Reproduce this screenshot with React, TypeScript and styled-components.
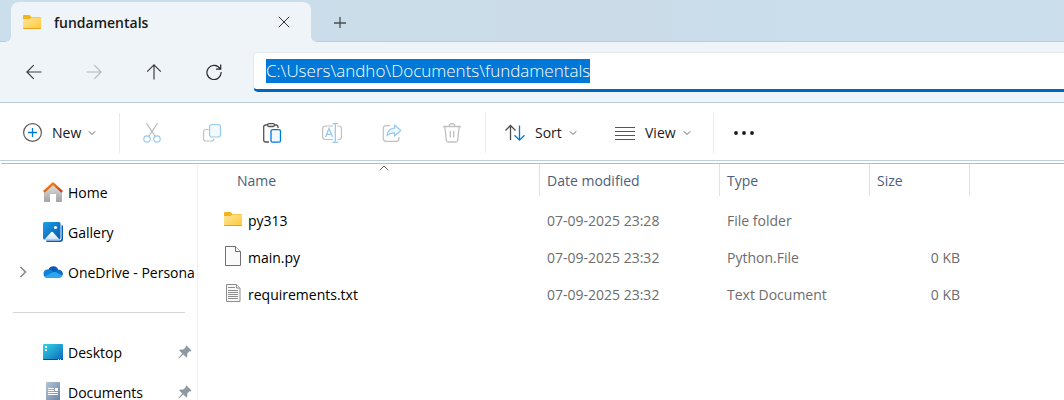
import React, { useEffect, useRef } from "react";
import styled, { createGlobalStyle } from "styled-components";

const GlobalStyle = createGlobalStyle`
  *, *::before, *::after { box-sizing: border-box; }
  body {
    margin: 0;
    background: #fff;
    color: #1a1a1a;
    font-family: "Open Sans", "Noto Sans", sans-serif;
    font-size: 14px;
    line-height: 20px;
  }
  button, input {
    font: inherit;
    color: inherit;
    background: none;
    border: 0;
    padding: 0;
    margin: 0;
  }
  svg { display: block; flex: none; }
`;

const Window = styled.div`
  display: flex;
  flex-direction: column;
  height: 100vh;
  overflow: hidden;
`;

const TabStrip = styled.div`
  display: flex;
  align-items: flex-end;
  flex: none;
  height: 42px;
  padding-left: 11px;
  background: linear-gradient(90deg, #cbdeec 0%, #cbdce8 60%, #cadeec 75%, #ccdeeb 100%);
  box-shadow: inset 0 -1px 0 #bacddb;
`;

const Tab = styled.div`
  position: relative;
  display: flex;
  align-items: center;
  width: 300px;
  height: 40px;
  padding: 0 17px 0 11px;
  border-radius: 8px 8px 0 0;
  background: #eff4f9;

  &::before, &::after {
    content: "";
    position: absolute;
    bottom: 0;
    width: 5px;
    height: 5px;
  }
  &::before {
    left: -5px;
    background: radial-gradient(circle at 0 0, transparent 4px, #bacddb 4px, #eff4f9 5px);
  }
  &::after {
    right: -5px;
    background: radial-gradient(circle at 100% 0, transparent 4px, #bacddb 4px, #eff4f9 5px);
  }
`;

const TabTitle = styled.span`
  flex: 1;
  margin-left: 12px;
  padding-top: 2px;
  font-weight: 600;
`;

const IconButton = styled.button<{ $width?: number }>`
  display: flex;
  align-items: center;
  justify-content: center;
  flex: none;
  width: ${(p) => p.$width ?? 60}px;
  height: 40px;
`;

const TabButton = styled(IconButton)`
  width: 20px;
`;

const NewTabButton = styled(IconButton)`
  width: 58px;
`;

const NavBar = styled.div`
  display: flex;
  align-items: center;
  flex: none;
  height: 61px;
  padding-left: 4px;
  background: #eff4f9;
  border-bottom: 1px solid #bccddb;
`;

const AddressBox = styled.div`
  flex: 1;
  display: flex;
  align-items: center;
  height: 40px;
  margin-left: 9px;
  padding-left: 12px;
  background: #fff;
  border: 1px solid #e6eaee;
  border-right: 0;
  border-bottom: 3px solid #0067c0;
  border-radius: 5px 0 0 5px;
`;

const AddressInput = styled.input`
  width: 100%;
  height: 24px;
  outline: 0;
  font-size: 17px;
  font-weight: 300;
  line-height: 24px;
  color: #1a1a1a;

  &::selection {
    background: #0078d7;
    color: #fff;
  }
`;

const Toolbar = styled.div`
  display: flex;
  align-items: center;
  flex: none;
  height: 58px;
  padding: 3px 0 0 22px;
  border-bottom: 1px solid #bccddb;
`;

const MenuButton = styled.button<{ $width: number }>`
  display: flex;
  align-items: center;
  flex: none;
  width: ${(p) => p.$width}px;
  height: 40px;
  gap: 10px;

  svg + span + svg { margin-left: -3px; }
`;

const Divider = styled.div`
  flex: none;
  width: 1px;
  height: 40px;
  background: #ebebeb;
`;

const ActionGroup = styled.div`
  display: flex;
  margin: 0 3px 0 2px;
`;

const ViewGroup = styled.div`
  display: flex;
  margin-left: 19px;
`;

const Main = styled.div`
  display: flex;
  flex: 1;
  min-height: 0;
  margin: 2px 0 0 1px;
  border-top: 1px solid #bcbcbc;
`;

const Sidebar = styled.nav`
  flex: none;
  width: 197px;
  padding-top: 9px;
  border-right: 1px solid #f0f0f0;
`;

const SideLink = styled.a`
  display: flex;
  align-items: center;
  height: 40px;
  padding: 0 5px 0 12px;
  color: #000;
  text-decoration: none;
  white-space: nowrap;

  svg { margin-bottom: 2px; }
`;

const ExpandSlot = styled.span`
  display: flex;
  justify-content: center;
  flex: none;
  width: 20px;
  margin-right: 10px;
`;

const SideLabel = styled.span`
  flex: 1;
  min-width: 0;
  margin-left: 5px;
`;

const SideRule = styled.hr`
  height: 1px;
  margin: 19px 12px 20px;
  border: 0;
  background: #d5d5d5;
`;

const FilePane = styled.main`
  flex: 1;
  min-width: 0;
`;

const FileTable = styled.table`
  width: 100%;
  table-layout: fixed;
  border-collapse: separate;
  border-spacing: 0;

  tbody::before {
    content: "";
    display: block;
    height: 6px;
  }
`;

const HeadCell = styled.th<{ $width?: number; $indent?: number }>`
  position: relative;
  width: ${(p) => (p.$width ? `${p.$width}px` : "auto")};
  height: 32px;
  padding: 2px 0 0 ${(p) => p.$indent ?? 7}px;
  border-right: ${(p) => (p.$width ? "1px solid #e2e2e2" : "0")};
  color: #4c607a;
  font-weight: 400;
  text-align: left;
`;

const SortMark = styled.svg`
  position: absolute;
  top: 1px;
  left: calc(50% + 10px);
`;

const Cell = styled.td<{ $right?: boolean }>`
  height: 37px;
  padding: 0 10px 0 7px;
  color: #6d6d6d;
  text-align: ${(p) => (p.$right ? "right" : "left")};
  white-space: nowrap;
`;

const NameCell = styled(Cell)`
  padding-left: 25px;
  color: #000;
`;

const FileName = styled.div`
  display: flex;
  align-items: center;
  gap: 5px;

  svg { margin-bottom: 4px; }
`;

const FolderIcon = () => (
  <svg width="20" height="20" viewBox="0 0 20 20">
    <defs>
      <linearGradient id="folder" x1="0" y1="0" x2="1" y2="1">
        <stop offset="0" stopColor="#ffe5a0" />
        <stop offset="1" stopColor="#ffc935" />
      </linearGradient>
    </defs>
    <path d="M1 4a1 1 0 0 1 1-1h5.500l2 2H18a1 1 0 0 1 1 1v3H1z" fill="#f5b31a" />
    <path d="M1 7h6.500l2-1.500H19V16a1 1 0 0 1-1 1H2a1 1 0 0 1-1-1z" fill="url(#folder)" />
    <path d="M1 16h18a1 1 0 0 1-1 1H2a1 1 0 0 1-1-1z" fill="#e9a21e" />
  </svg>
);

const PageIcon = () => (
  <svg width="20" height="20" viewBox="0 0 20 20" fill="#fafafa" stroke="#707070">
    <path d="M2.500.5h10l5 5v14h-15z" />
    <path d="M12.500.5v5h5" />
  </svg>
);

const TextIcon = () => (
  <svg width="20" height="20" viewBox="0 0 20 20" fill="#f8f8f8" stroke="#8d8d8d">
    <path d="M3.500 1.500h10l3.500 3.500v13.500H3.500z" />
    <path d="M13.500 1.500V5H17M5 4.500h7M5 7.500h10M5 9.500h10M5 11.500h10M5 13.500h10M5 15.500h10" />
  </svg>
);

const HomeIcon = () => (
  <svg width="20" height="20" viewBox="0 0 20 20">
    <defs>
      <linearGradient id="wall" x1="0" y1="0" x2="0" y2="1">
        <stop offset="0" stopColor="#e2e2e2" />
        <stop offset="1" stopColor="#a3a3a3" />
      </linearGradient>
      <linearGradient id="roof" x1="0" y1="0" x2="1" y2="1">
        <stop offset="0" stopColor="#f7941d" />
        <stop offset="1" stopColor="#c93c14" />
      </linearGradient>
    </defs>
    <path d="M1 9l9-7.500L19 9v10a1 1 0 0 1-1 1h-5v-8H7v8H2a1 1 0 0 1-1-1z" fill="url(#wall)" />
    <path d="M.8 9.800L10 1.500l9.200 8.300" fill="none" stroke="url(#roof)" strokeWidth="2.400" strokeLinejoin="round" />
  </svg>
);

const GalleryIcon = () => (
  <svg width="20" height="20" viewBox="0 0 20 20">
    <defs>
      <linearGradient id="photo" x1="0" y1="0" x2="1" y2="1">
        <stop offset="0" stopColor="#1ea0e6" />
        <stop offset="1" stopColor="#0757ae" />
      </linearGradient>
      <linearGradient id="hill" x1="0" y1="0" x2="0" y2="1">
        <stop offset="0" stopColor="#fff" />
        <stop offset="1" stopColor="#cfe6fa" />
      </linearGradient>
    </defs>
    <path d="M18.500 3A1.500 1.500 0 0 1 20 4.500V17a3 3 0 0 1-3 3H4.500A1.500 1.500 0 0 1 3 18.500h13.500a2 2 0 0 0 2-2z" fill="#0a5cb0" />
    <rect width="17.500" height="17.500" rx="1.500" fill="url(#photo)" />
    <path d="M1.500 17.500L8 10.200a1.400 1.400 0 0 1 2 0l6.500 7.300z" fill="url(#hill)" />
    <circle cx="12.500" cy="5.500" r="1.600" fill="#fff" />
  </svg>
);

const CloudIcon = () => (
  <svg width="20" height="20" viewBox="0 0 20 20">
    <path d="M5.500 7.500A5.200 5.200 0 0 1 15.300 8L11 12z" fill="#0a5bb5" />
    <path d="M4.500 16A4.300 4.300 0 0 1 4 7.500a5 5 0 0 1 4.500 1L14 12l-7 4z" fill="#1180d8" />
    <path d="M15.200 7.800A4.200 4.200 0 0 1 20 12l-1 2-8-4.500a5 5 0 0 1 4.200-1.700z" fill="#0f6fc9" />
    <path d="M1.500 14.500L10 10.200a3 3 0 0 1 2.500 0l7 3.300A3.200 3.200 0 0 1 16.500 16h-12a4 4 0 0 1-3-1.500z" fill="#2aa7ee" />
  </svg>
);

const DesktopIcon = () => (
  <svg width="20" height="20" viewBox="0 0 20 20">
    <defs>
      <linearGradient id="desk" x1="0" y1="0" x2="1" y2="1">
        <stop offset="0" stopColor="#35d5e2" />
        <stop offset="1" stopColor="#0b68bd" />
      </linearGradient>
    </defs>
    <rect y="2" width="20" height="16" rx="1" fill="url(#desk)" />
    <path d="M0 17h20a1 1 0 0 1-1 1H1a1 1 0 0 1-1-1z" fill="#0b4c82" />
    <path d="M2 4h2v2H2zM2 7h2v2H2z" fill="#fff" />
    <path d="M15 17h1v1h-1zM17 17h1v1h-1z" fill="#bfe4f7" />
  </svg>
);

const DocumentsIcon = () => (
  <svg width="20" height="20" viewBox="0 0 20 20">
    <defs>
      <linearGradient id="doc" x1="0" y1="0" x2="1" y2="1">
        <stop offset="0" stopColor="#b4c4d8" />
        <stop offset="1" stopColor="#6883a3" />
      </linearGradient>
    </defs>
    <rect x="3" width="14" height="20" rx="1" fill="url(#doc)" />
    <path d="M5 6.500h6M5 8.500h6M5 10.500h10M5 12.500h10" stroke="#fff" />
    <path d="M12 6h3v3h-3z" fill="#fff" />
  </svg>
);

const PinIcon = () => (
  <svg width="14" height="14" viewBox="0 0 14 14">
    <path d="M8.500.5l5 5-1 1-1-.3-2.200 2.300v2.800l-1 1.200-3-3L1 13.500l-.7-.6L4.400 8.500 1.200 5.400l1.200-1 3 .2L7.800 2.300 7.600 1.300z" fill="#8d99a3" />
  </svg>
);

const ChevronDown = () => (
  <svg width="8" height="8" viewBox="0 0 8 8" fill="none" stroke="#6a6a6a">
    <path d="M.8 2.300L4 5.500l3.200-3.200" />
  </svg>
);

const ChevronRight = () => (
  <svg width="8" height="12" viewBox="0 0 8 12" fill="none" stroke="#858585" strokeWidth="1.500">
    <path d="M1.500 1L6.500 6l-5 5" />
  </svg>
);

const CloseIcon = () => (
  <svg width="12" height="12" viewBox="0 0 12 12" fill="none" stroke="#333">
    <path d="M.8.8l10.400 10.400M11.200.8L.8 11.200" />
  </svg>
);

const PlusIcon = () => (
  <svg width="12" height="12" viewBox="0 0 12 12" fill="none" stroke="#4a4f54" strokeWidth="1.300">
    <path d="M6 1v12M0 7h12" />
  </svg>
);

const ArrowIcon = ({ dir, muted }: { dir: "left" | "right" | "up"; muted?: boolean }) => {
  const paths = {
    left: "M15.500 8H1M7.700 1.200L.9 8l6.800 6.800",
    right: "M.5 8H15M8.300 1.200L15.100 8l-6.800 6.800",
    up: "M8 15.500V1M1.200 7.700L8 .9l6.800 6.800",
  };
  return (
    <svg width="16" height="16" viewBox="0 0 16 16" fill="none" stroke={muted ? "#b4b8bc" : "#3c3f42"} strokeWidth="1.200">
      <path d={paths[dir]} />
    </svg>
  );
};

const RefreshIcon = () => (
  <svg width="16" height="16" viewBox="0 0 16 16" fill="none" stroke="#2b2b2b" strokeWidth="1.200">
    <path d="M14.200 5A7.100 7.100 0 1 0 15.100 8M14.700.5v4.700H10" />
  </svg>
);

const NewIcon = () => (
  <svg width="20" height="20" viewBox="0 0 20 20" fill="none">
    <circle cx="10.500" cy="9.500" r="8.900" stroke="#5c5c5c" strokeWidth="1.200" />
    <path d="M10.500 5v9M6 9.500h9" stroke="#0078d4" strokeWidth="1.300" />
  </svg>
);

const CutIcon = () => (
  <svg width="20" height="20" viewBox="0 0 20 20" fill="none" strokeWidth="1.200">
    <path d="M4.500.3l9 13.400M15.500.3l-9 13.400" stroke="#bfbfbf" />
    <circle cx="5" cy="16" r="3.200" stroke="#98c9ee" />
    <circle cx="15" cy="16" r="3.200" stroke="#98c9ee" />
  </svg>
);

const CopyIcon = () => (
  <svg width="20" height="20" viewBox="0 0 20 20" fill="none" strokeWidth="1.200">
    <path d="M6.500 6.500H4A2.500 2.500 0 0 0 1.500 9v6.500A2.500 2.500 0 0 0 4 18h5.500a2.500 2.500 0 0 0 2.500-2.500" stroke="#c0c0c0" />
    <rect x="7.500" y="1.500" width="11" height="12.500" rx="2.500" stroke="#98c9ee" fill="#f3f9fd" />
  </svg>
);

const PasteIcon = () => (
  <svg width="20" height="20" viewBox="0 0 20 20" fill="none" strokeWidth="1.300">
    <path d="M7 19H3.500A1.800 1.800 0 0 1 1.700 17.200V3.800A1.800 1.800 0 0 1 3.500 2H6M12 2h2.300a1.800 1.800 0 0 1 1.700 1.800V5" stroke="#555" />
    <rect x="5.500" y=".7" width="7" height="2.800" rx="1.400" stroke="#555" />
    <rect x="9" y="6.700" width="9.500" height="12.500" rx="1.500" stroke="#0078d4" fill="#f0f7fd" />
  </svg>
);

const RenameIcon = () => (
  <svg width="20" height="20" viewBox="0 0 20 20" fill="none" strokeWidth="1.200">
    <path d="M11 3H3.500A3 3 0 0 0 .6 6v7.500a3 3 0 0 0 3 3H11M15.500 3h1a3 3 0 0 1 3 3v7.500a3 3 0 0 1-3 3h-1" stroke="#c0c0c0" />
    <path d="M13.300 1v18M10.500.7h5.600M10.500 19.300h5.600M3.500 14L7 5.500l3.500 8.500M4.700 11.300h4.600" stroke="#98c9ee" strokeWidth="1.300" />
  </svg>
);

const ShareIcon = () => (
  <svg width="20" height="20" viewBox="0 0 20 20" fill="none" strokeWidth="1.200" strokeLinejoin="round">
    <path d="M8 2.600H4A2.800 2.800 0 0 0 1.300 5.400V15.500A2.800 2.800 0 0 0 4 18.300h10.200a2.800 2.800 0 0 0 2.800-2.800V14" stroke="#c0c0c0" />
    <path d="M12.500 2l6.300 5.500-6.300 5.500V9.900C8.500 9.900 6.500 11 5 13c.3-4.500 3-7.600 7.500-7.900z" stroke="#98c9ee" fill="#f1f8fd" />
  </svg>
);

const DeleteIcon = () => (
  <svg width="20" height="20" viewBox="0 0 20 20" fill="none" stroke="#c0c0c0" strokeWidth="1.300">
    <path d="M1 3.500h18M7 3.500a3 3 0 0 1 6 0M2.800 3.500l1.500 13.700A2 2 0 0 0 6.300 19h7.400a2 2 0 0 0 2-1.800l1.500-13.700M8.300 8v6.500M11.700 8v6.500" />
  </svg>
);

const SortIcon = () => (
  <svg width="20" height="20" viewBox="0 0 20 20" fill="none" strokeWidth="1.300">
    <path d="M5.500 17V2.500M.5 7.500l5-5 5 5" stroke="#4d4d4d" />
    <path d="M14.500 2.500V17M9.500 12.200l5 5 5-5" stroke="#0078d4" />
  </svg>
);

const ViewIcon = () => (
  <svg width="20" height="20" viewBox="0 0 20 20" fill="none" stroke="#555">
    <path d="M0 4.500h20M0 8.500h20M0 12.500h20M0 16.500h20" strokeWidth="1.200" />
  </svg>
);

const MoreIcon = () => (
  <svg width="20" height="20" viewBox="0 0 20 20" fill="#1a1a1a">
    <circle cx="2" cy="10" r="1.900" />
    <circle cx="10" cy="10" r="1.900" />
    <circle cx="18" cy="10" r="1.900" />
  </svg>
);

const actions = [
  { label: "Cut", icon: <CutIcon />, disabled: true },
  { label: "Copy", icon: <CopyIcon />, disabled: true },
  { label: "Paste", icon: <PasteIcon />, disabled: false },
  { label: "Rename", icon: <RenameIcon />, disabled: true },
  { label: "Share", icon: <ShareIcon />, disabled: true },
  { label: "Delete", icon: <DeleteIcon />, disabled: true },
];

const places = [
  { label: "Home", icon: <HomeIcon /> },
  { label: "Gallery", icon: <GalleryIcon /> },
  { label: "OneDrive - Persona", icon: <CloudIcon />, expandable: true },
];

const pinned = [
  { label: "Desktop", icon: <DesktopIcon /> },
  { label: "Documents", icon: <DocumentsIcon /> },
];

const files = [
  { name: "py313", icon: <FolderIcon />, date: "07-09-2025 23:28", type: "File folder", size: "" },
  { name: "main.py", icon: <PageIcon />, date: "07-09-2025 23:32", type: "Python.File", size: "0 KB" },
  { name: "requirements.txt", icon: <TextIcon />, date: "07-09-2025 23:32", type: "Text Document", size: "0 KB" },
];

export default function App() {
  const address = useRef<HTMLInputElement>(null);

  useEffect(() => {
    address.current?.focus();
    address.current?.select();
  }, []);

  return (
    <Window>
      <GlobalStyle />
      <TabStrip>
        <Tab>
          <FolderIcon />
          <TabTitle>fundamentals</TabTitle>
          <TabButton aria-label="Close tab"><CloseIcon /></TabButton>
        </Tab>
        <NewTabButton aria-label="New tab"><PlusIcon /></NewTabButton>
      </TabStrip>

      <NavBar>
        <IconButton aria-label="Back"><ArrowIcon dir="left" /></IconButton>
        <IconButton aria-label="Forward" disabled><ArrowIcon dir="right" muted /></IconButton>
        <IconButton aria-label="Up"><ArrowIcon dir="up" /></IconButton>
        <IconButton aria-label="Refresh"><RefreshIcon /></IconButton>
        <AddressBox>
          <AddressInput
            ref={address}
            aria-label="Address"
            spellCheck={false}
            defaultValue={"C:\\Users\\andho\\Documents\\fundamentals"}
          />
        </AddressBox>
      </NavBar>

      <Toolbar>
        <MenuButton $width={97}><NewIcon /><span>New</span><ChevronDown /></MenuButton>
        <Divider />
        <ActionGroup>
          {actions.map((a) => (
            <IconButton key={a.label} aria-label={a.label} disabled={a.disabled}>{a.icon}</IconButton>
          ))}
        </ActionGroup>
        <Divider />
        <ViewGroup>
          <MenuButton $width={110}><SortIcon /><span>Sort</span><ChevronDown /></MenuButton>
          <MenuButton $width={98}><ViewIcon /><span>View</span><ChevronDown /></MenuButton>
        </ViewGroup>
        <Divider />
        <IconButton aria-label="See more"><MoreIcon /></IconButton>
      </Toolbar>

      <Main>
        <Sidebar aria-label="Places">
          {places.map((p) => (
            <SideLink key={p.label} href="#">
              <ExpandSlot>{p.expandable && <ChevronRight />}</ExpandSlot>
              {p.icon}
              <SideLabel>{p.label}</SideLabel>
            </SideLink>
          ))}
          <SideRule />
          {pinned.map((p) => (
            <SideLink key={p.label} href="#">
              <ExpandSlot />
              {p.icon}
              <SideLabel>{p.label}</SideLabel>
              <PinIcon />
            </SideLink>
          ))}
        </Sidebar>

        <FilePane>
          <FileTable>
            <thead>
              <tr>
                <HeadCell $width={342} $indent={39} aria-sort="ascending">
                  Name
                  <SortMark width="10" height="6" viewBox="0 0 10 6" fill="none" stroke="#666">
                    <path d="M.7 5.300L5 1l4.300 4.300" />
                  </SortMark>
                </HeadCell>
                <HeadCell $width={180}>Date modified</HeadCell>
                <HeadCell $width={150}>Type</HeadCell>
                <HeadCell $width={100}>Size</HeadCell>
                <HeadCell as="td" />
              </tr>
            </thead>
            <tbody>
              {files.map((f) => (
                <tr key={f.name}>
                  <NameCell><FileName>{f.icon}{f.name}</FileName></NameCell>
                  <Cell>{f.date}</Cell>
                  <Cell>{f.type}</Cell>
                  <Cell $right>{f.size}</Cell>
                </tr>
              ))}
            </tbody>
          </FileTable>
        </FilePane>
      </Main>
    </Window>
  );
}
